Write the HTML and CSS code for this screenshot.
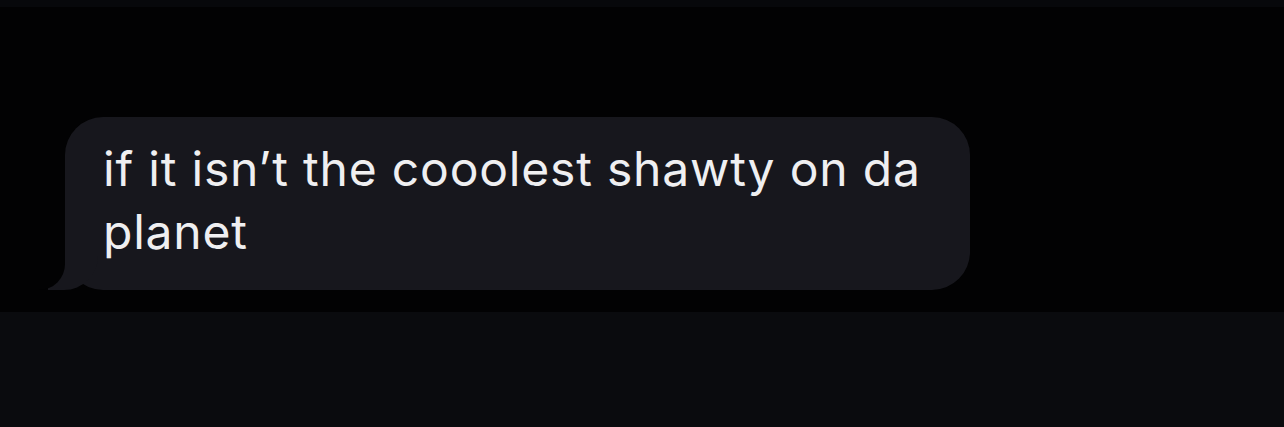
FILE: index.html
```html
<!DOCTYPE html>
<html>
<head>
<meta charset="utf-8">
<title>Message</title>
<link rel="stylesheet" href="styles.css">
</head>
<body>
	<div class="top_bar"></div>
	<div class="thread">
		<div class="bubble">if it isn’t the cooolest shawty on da planet</div>
	</div>
	<div class="input_bar"></div>
</body>
</html>
```

FILE: styles.css
```css
html, body {
	margin: 0;
	padding: 0;
	background: #020203;
	height: 100%;
}
body {
	display: flex;
	flex-direction: column;
	font-family: Inter, "Liberation Sans", sans-serif;
}
.top_bar {
	height: 7px;
	background: #07080b;
}
.thread {
	height: 305px;
	padding: 110px 0 0 65px;
	box-sizing: border-box;
}
.bubble {
	position: relative;
	width: 905px;
	box-sizing: border-box;
	padding: 20px 38px 27px 38px;
	background: #17171d;
	border-radius: 38px;
	color: #efeff1;
	font-size: 48px;
	line-height: 63px;
	letter-spacing: 0.8px;
}
.bubble::before {
	content: "";
	position: absolute;
	bottom: 0;
	left: -17px;
	width: 50px;
	height: 40px;
	background: #17171d;
	border-bottom-right-radius: 34px;
}
.bubble::after {
	content: "";
	position: absolute;
	bottom: 0;
	left: -30px;
	width: 30px;
	height: 44px;
	background: #020203;
	border-bottom-right-radius: 26px;
}
.input_bar {
	flex: 1;
	background: #0a0b0e;
}
```
